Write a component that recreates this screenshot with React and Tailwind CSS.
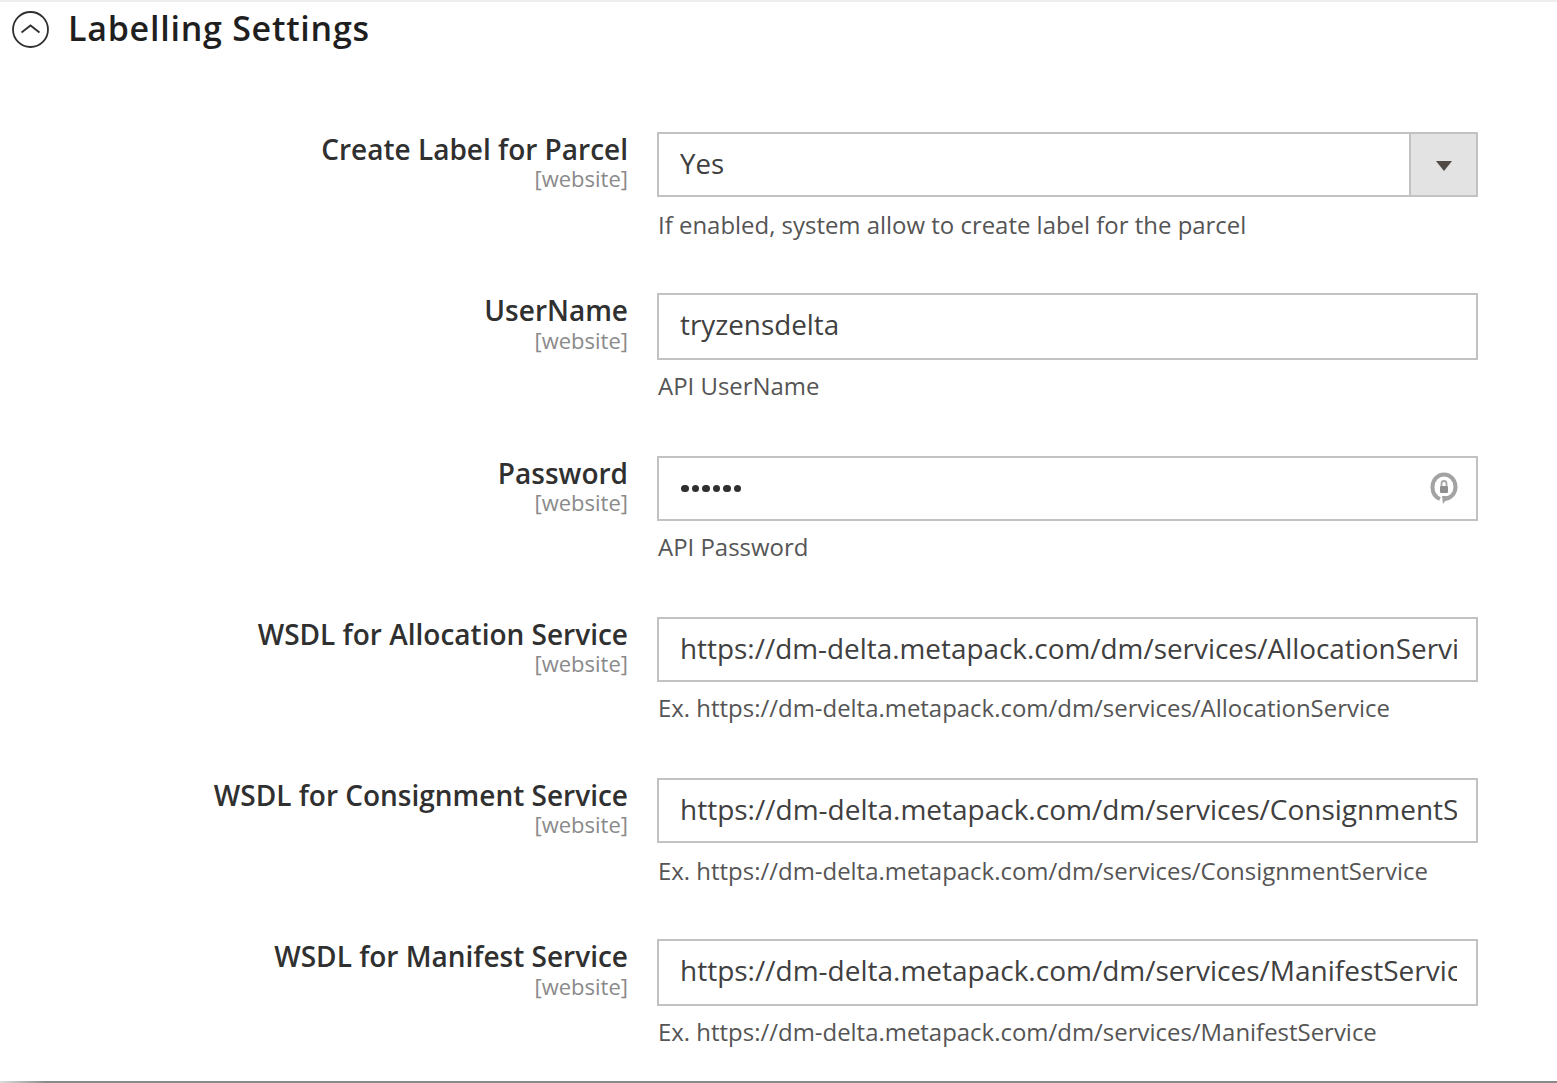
const font = { fontFamily: '"Open Sans", sans-serif' };

function Row({ label, note, children, pb, noteMt = "mt-[10px]", webMt = "mt-0" }) {
  return (
    <div className={`flex ${pb}`}>
      <div className="w-[628px] shrink-0 pt-[2px] text-right">
        <div className="text-[28px] leading-[30px] font-semibold text-[#303030]">{label}</div>
        <div className={`${webMt} text-[22px] leading-[28px] text-[#8a8a8a]`}>[website]</div>
      </div>
      <div className="ml-[29px] w-[821px] shrink-0">
        {children}
        <div className={`${noteMt} pl-[1px] text-[23.95px] leading-[32px] text-[#555]`}>{note}</div>
      </div>
    </div>
  );
}

function Input({ value, h, size = "text-[28px]", pad = "pb-[2px]" }) {
  return (
    <div className={`${h} ${size} ${pad} flex items-center overflow-hidden border-2 border-[#c2c2c2] bg-white pl-[21px] pr-[19px] text-[#404040]`}>
      <div className="overflow-hidden whitespace-nowrap">{value}</div>
    </div>
  );
}

export default function App() {
  return (
    <div className="relative h-[1083px] w-[1557px] overflow-hidden bg-white" style={font}>
      <div className="h-[2px] bg-[#eeeeee]" />
      <div className="flex items-center pl-[11px] pt-[6px]">
        <svg width="39" height="39" viewBox="0 0 39 39" fill="none">
          <circle cx="19.5" cy="19.5" r="17.5" stroke="#303030" strokeWidth="1.8" />
          <path d="M10.5 22.5 L19.5 15.5 L28.5 22.5" stroke="#303030" strokeWidth="1.8" />
        </svg>
        <div className="ml-[18px] mb-[2px] text-[34px] leading-[40px] font-semibold tracking-[0.75px] text-[#1f1f1f]">Labelling Settings</div>
      </div>
      <div className="pt-[82px]">
        <Row label="Create Label for Parcel" note="If enabled, system allow to create label for the parcel" noteMt="mt-[12px]" pb="pb-[52px]">
          <div className="flex h-[65px] items-stretch border-2 border-[#c2c2c2] bg-white">
            <div className="flex flex-1 items-center pb-[2px] pl-[21px] text-[27.6px] text-[#404040]">Yes</div>
            <div className="flex w-[67px] items-center justify-center border-l-2 border-[#c2c2c2] bg-[#e3e3e3]">
              <svg width="16" height="10" viewBox="0 0 16 10" className="mt-[2px]"><path d="M0 0H16L8 10Z" fill="#514943" /></svg>
            </div>
          </div>
        </Row>
        <Row label="UserName" note="API UserName" webMt="mt-[1px]" pb="pb-[54px]">
          <Input value="tryzensdelta" h="h-[67px]" size="text-[27.8px]" pad="pb-[4px]" />
        </Row>
        <Row label="Password" note="API Password" pb="pb-[54px]">
          <div className="flex h-[65px] items-center justify-between border-2 border-[#c2c2c2] bg-white pl-[22px] pr-[18px]">
            <div className="flex gap-[3px]">
              {[0, 1, 2, 3, 4, 5].map((i) => (
                <span key={i} className="h-[7.5px] w-[7.5px] rounded-full bg-[#303030]" />
              ))}
            </div>
            <svg width="28" height="36" viewBox="0 0 28 36" fill="none" className="mb-[2px]">
              <path d="M10 29 C5 27 2.5 22.5 2.5 17 C2.5 10 7.5 4.5 14 4.5 C20.5 4.5 25.5 10 25.5 17 C25.5 23.5 20.5 29 14 29" stroke="#a3a3a3" strokeWidth="4" />
              <path d="M19 26 L13 34 L12 26 Z" fill="#a3a3a3" />
              <rect x="10" y="16" width="8" height="7" rx="1" fill="#8f8f8f" />
              <path d="M11.5 16 V13.5 a2.5 2.5 0 0 1 5 0 V16" stroke="#a8a8a8" strokeWidth="1.8" />
            </svg>
          </div>
        </Row>
        <Row label="WSDL for Allocation Service" note="Ex. https://dm-delta.metapack.com/dm/services/AllocationService" pb="pb-[54px]">
          <Input value="https://dm-delta.metapack.com/dm/services/AllocationService" h="h-[65px]" size="text-[27.9px]" />
        </Row>
        <Row label="WSDL for Consignment Service" note="Ex. https://dm-delta.metapack.com/dm/services/ConsignmentService" noteMt="mt-[12px]" pb="pb-[52px]">
          <Input value="https://dm-delta.metapack.com/dm/services/ConsignmentService" h="h-[65px]" pad="pb-[4px]" />
        </Row>
        <Row label="WSDL for Manifest Service" note="Ex. https://dm-delta.metapack.com/dm/services/ManifestService" webMt="mt-[1px]">
          <Input value="https://dm-delta.metapack.com/dm/services/ManifestService" h="h-[67px]" pad="pb-[6px]" />
        </Row>
      </div>
      <div className="absolute bottom-0 left-0 h-[2px] w-full bg-gradient-to-r from-[#dddddd] via-[#8a8a8a] to-[#8a8a8a] [--tw-gradient-via-position:3%]" />
    </div>
  );
}
